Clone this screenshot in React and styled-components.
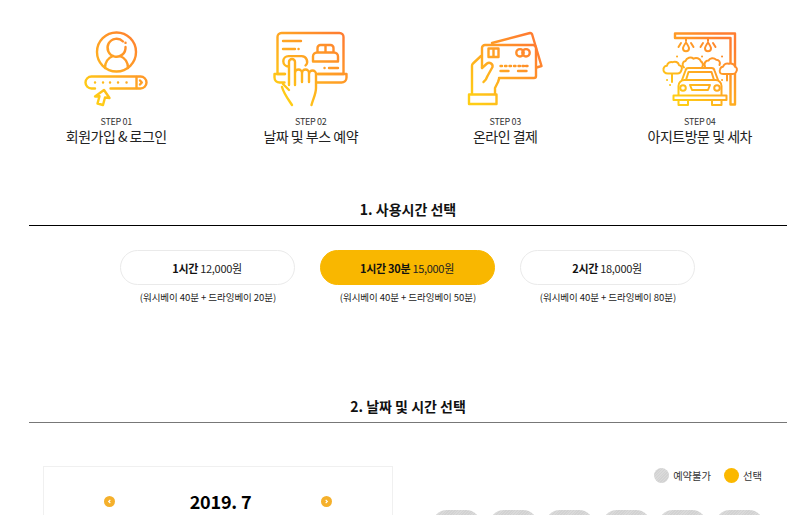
import React from "react";
import styled, { createGlobalStyle } from "styled-components";

const GlobalStyle = createGlobalStyle`
  html, body { margin: 0; padding: 0; background: #fff; }
  body { font-family: "Noto Sans CJK KR", "Noto Sans", sans-serif; color: #111; }
`;

const Page = styled.div`
  width: 800px;
  height: 515px;
  overflow: hidden;
  padding: 0 13px 0 29px;
  box-sizing: border-box;
`;

const StepList = styled.ul`
  display: grid;
  grid-template-columns: repeat(4, 194.5px);
  margin: 0 0 0 -10px;
  padding: 30px 0 0;
  list-style: none;
`;

const Step = styled.li`
  display: flex;
  flex-direction: column;
  align-items: center;
`;

const StepIcon = styled.svg`
  display: block;
  width: 80px;
  height: 80px;
  fill: none;
  stroke-width: ${(p) => p.$weight || 2.4};
  stroke-linecap: round;
  stroke-linejoin: round;
`;

const StepNo = styled.span`
  margin-top: 6px;
  font-size: 9px;
  line-height: 12px;
  letter-spacing: -0.3px;
  color: #333;
`;

const StepName = styled.strong`
  margin-bottom: 3px;
  font-size: 14px;
  font-weight: 400;
  line-height: 17px;
  letter-spacing: -0.5px;
  color: #222;
`;

const SectionTitle = styled.h2`
  margin: ${(p) => p.$top}px 0 0;
  padding-bottom: 6px;
  font-size: 14px;
  font-weight: 700;
  line-height: 20px;
  text-align: center;
  color: #111;
  border-bottom: 1px solid ${(p) => p.$line};
`;

const TimeRow = styled.div`
  display: flex;
  justify-content: center;
  gap: 25px;
  margin: 24px 2px 0 0;
`;

const TimeOption = styled.div`
  width: 175px;
  text-align: center;
`;

const TimeButton = styled.button`
  display: block;
  width: 100%;
  height: 35px;
  padding: 0;
  border: 1px solid ${(p) => (p.$active ? "#f9b700" : "#eaeaea")};
  border-radius: 18px;
  background: ${(p) => (p.$active ? "#f9b700" : "#fff")};
  font-family: inherit;
  font-size: 11px;
  letter-spacing: -0.3px;
  color: #222;
  b { font-weight: 700; color: #111; }
`;

const TimeNote = styled.p`
  margin: 5px 0 0;
  padding-left: 2px;
  font-size: 9.5px;
  line-height: 15px;
  letter-spacing: -0.05px;
  color: #222;
`;

const Booking = styled.div`
  display: flex;
  margin: 43px 0 0 14px;
`;

const Calendar = styled.div`
  flex: none;
  box-sizing: border-box;
  width: 350px;
  height: 300px;
  padding-top: 21px;
  border: 1px solid #f0f0f0;
`;

const CalendarHead = styled.div`
  display: flex;
  align-items: center;
  justify-content: space-between;
  padding: 0 60px;
`;

const MonthTitle = styled.strong`
  padding-left: 5px;
  font-size: 18px;
  font-weight: 700;
  line-height: 26px;
  letter-spacing: -0.2px;
  color: #000;
`;

const MonthArrow = styled.span`
  display: flex;
  align-items: center;
  justify-content: center;
  width: 11px;
  height: 11px;
  border-radius: 50%;
  background: #f5b02b;
  svg { width: 5px; height: 5px; fill: none; stroke: #fff; stroke-width: 1.4; }
`;

const Slots = styled.div`
  flex: 1;
  padding: 2px 0 0 39px;
`;

const Legend = styled.div`
  display: flex;
  justify-content: flex-end;
  gap: 13px;
  padding-right: 25px;
`;

const LegendItem = styled.span`
  display: flex;
  align-items: center;
  gap: 4px;
  font-size: 10.3px;
  line-height: 15px;
  color: #333;
`;

const hatch = `repeating-linear-gradient(135deg, #d2d2d2 0 1px, #dadada 1px 2px)`;

const Dot = styled.i`
  width: 15px;
  height: 15px;
  border-radius: 50%;
  background: ${(p) => (p.$on ? "#fbb800" : hatch)};
`;

const SlotRow = styled.div`
  display: flex;
  gap: 7.5px;
  margin-top: 27px;
`;

const Slot = styled.div`
  width: 49px;
  height: 30px;
  border-radius: 15px;
  background: ${hatch};
`;

const Grad = ({ id, x1, y1, x2, y2 }) => (
  <defs>
    <linearGradient id={id} gradientUnits="userSpaceOnUse" x1={x1} y1={y1} x2={x2} y2={y2}>
      <stop offset="0" stopColor="#ffcd15" />
      <stop offset="1" stopColor="#ff7d30" />
    </linearGradient>
  </defs>
);

const LoginIcon = () => (
  <StepIcon viewBox="76 30 80 80" stroke="url(#g1)">
    <Grad id="g1" x1="92" y1="96" x2="146" y2="42" />
    <circle cx="116.5" cy="52" r="19.500" />
    <path d="M123 41.500a9 9 0 1 0 2.500 5.500" />
    <path d="M125.500 42.800v.1" />
    <path d="M105 68c0-6 3-10 8-12M128 68c0-6-3-10-8-12" />
    <path d="M95 88.500h-3.500a6 6 0 0 1 0-12h49a6 6 0 0 1 0 12h-30" />
    <path d="M136.500 77v11" />
    <path d="M140 80.500l1.800 2-1.800 2" />
    <path d="M95 82.500h.1M103 82.500h.1M110 82.500h.1M118 82.500h.1M126.500 82.500h.1" />
    <path d="M104 90l5.500 8-4.500-.5-2 7.500-5.500-1.500 2-7.300-4.500.3z" />
  </StepIcon>
);

const BookIcon = () => (
  <StepIcon viewBox="271 30 80 80" stroke="url(#g2)">
    <Grad id="g2" x1="282" y1="96" x2="342" y2="36" />
    <path d="M285 74h-7.500V37a4 4 0 0 1 4-4h58a4 4 0 0 1 4 4v37h-26" />
    <path d="M283 41h18M283 49h12M298.500 49h.1" />
    <path d="M313 61.500v-5a4 4 0 0 1 4-4h17a4 4 0 0 1 4 4v5zM317.500 52v-4a3 3 0 0 1 3-3h10a3 3 0 0 1 3 3v4M325.500 45v7" />
    <path d="M324.500 68h.1M329 68h9" />
    <path d="M288.500 66.500a5.200 5.200 0 0 1 0-10.400h13a5.500 5.500 0 0 1 4 9.400" />
    <path d="M289 85V62a3 3 0 0 1 6 0v23M295 73a3.200 3.200 0 0 1 7 0v9M302 73a3.200 3.200 0 0 1 7 0v9M309 74a3.200 3.200 0 0 1 7 0v14c0 6-3 11-4.500 17" />
    <path d="M285 74h-10.500v3.500a5 5 0 0 0 5 5h5M318 74h28.500v3.500a5 5 0 0 1-5 5h-25" />
    <path d="M283 84l6 6M282 87c2 7 6 12 10 18" />
  </StepIcon>
);

const CardIcon = () => (
  <StepIcon viewBox="465 30 80 80" stroke="url(#g3)">
    <Grad id="g3" x1="474" y1="100" x2="534" y2="46" />
    <path d="M482 68V48a3 3 0 0 1 3-3h48a3 3 0 0 1 3 3v28a2 2 0 0 1-2 2h-35" />
    <path d="M492 43l38-10a2 2 0 0 1 2 1l9.500 32-5 1.500" />
    <path d="M488.500 48.500h10v8.500h-10zM493.500 48.500v8.500" />
    <circle cx="520" cy="52.800" r="3.700" />
    <circle cx="526" cy="52.800" r="3.700" />
    <path d="M500.500 66h1.500M505 66h1.500M509.500 66h1.500M514 66h1.500M518.500 66h1.500M522.500 66h1.500M526 66h1.500" />
    <path d="M500.500 71h8M518 71h8.500" />
    <path d="M481 56l-8 7.500a3 3 0 0 0-1 2.200V94" />
    <path d="M482 68l5-4.500a3.500 3.500 0 0 1 5.500 3.500l-5 9c-1 3-2.500 5-4 6" />
    <path d="M499 79l-1 3-3 6v6" />
    <path d="M469 94.500h27.500v9.500h-27.500z" />
  </StepIcon>
);

const WashIcon = () => (
  <StepIcon viewBox="660 30 80 80" stroke="url(#g4)" $weight={2}>
    <Grad id="g4" x1="682" y1="102" x2="730" y2="44" />
    <path d="M675 33.500h60v71h-4.500V38h-55.500z" strokeWidth="2.400" />
    <path d="M686 38v3M681 43l-2.500 4M691 43l2.500 4M708 38v3M703 43l-2.500 4M713 43l2.500 4" />
    <path d="M686 42.500c-2.200 3.200-3 4.400-3 5.700a3 3 0 0 0 6 0c0-1.300-.8-2.500-3-5.700zM708 42.500c-2.200 3.200-3 4.400-3 5.700a3 3 0 0 0 6 0c0-1.300-.8-2.500-3-5.700z" />
    <path d="M677 56.500h.1M702 56.500h.1M722 56.500h.1" />
    <path d="M684 67.500c-2.500-2-1.500-6 1.500-6.500 1-3.500 5.500-4.500 8-2.300 2.500-1.500 6.500-.5 7.500 2.800 2 1 2.500 3.800 1 6M705 66.500c-1.500-3 .5-6 3.500-6 1.200-2.700 5.500-3.200 7.500-.8 3 0 4.800 2.400 3.500 5.300" />
    <path d="M668 73.500c-3 0-5-2-4.500-4.500.2-2 2-3.300 3.500-3.300.5-3 3-4 5.500-3.500 2.500-1.200 6-.2 6.500 3 2.500.2 3.500 2.500 2.500 4.800-.5 2-2.500 3.500-4 3.500zM672 74v8" />
    <path d="M723 74c-2.800 0-4-2-3-4.500.5-1.800 1.800-2.700 3-2.700.8-3 3.500-4 6-3 2.500-.8 5.500.3 6 3 2 .4 2.500 3 1.200 5-.7 1.500-2 2.200-3.200 2.200zM727 74.500v6" fill="#fff" />
    <path d="M667 80h.1M670 85h.1M722 80h.1" />
    <path d="M682 80l3.500-9.500a3 3 0 0 1 3-2.500h23a3 3 0 0 1 3 2.500l3.500 9.500" fill="#fff" />
    <path d="M686 80l2.500-8h23l2.500 8z" />
    <path d="M678.500 95v-9a6 6 0 0 1 6-6h31a6 6 0 0 1 6 6v9" />
    <circle cx="683" cy="88" r="2.800" />
    <circle cx="717" cy="88" r="2.800" />
    <path d="M690 85h20l-2 5h-16z" />
    <path d="M673.500 95.500h53v4.500h-53zM678.500 100v5h9.500v-5M712 100v5h9.500v-5" />
  </StepIcon>
);

const steps = [
  { no: "STEP 01", name: "회원가입 & 로그인", icon: <LoginIcon /> },
  { no: "STEP 02", name: "날짜 및 부스 예약", icon: <BookIcon /> },
  { no: "STEP 03", name: "온라인 결제", icon: <CardIcon /> },
  { no: "STEP 04", name: "아지트방문 및 세차", icon: <WashIcon /> },
];

const times = [
  { label: "1시간", price: "12,000원", note: "(워시베이 40분 + 드라잉베이 20분)" },
  { label: "1시간 30분", price: "15,000원", note: "(워시베이 40분 + 드라잉베이 50분)", active: true },
  { label: "2시간", price: "18,000원", note: "(워시베이 40분 + 드라잉베이 80분)" },
];

const App = () => {
  return (
    <Page>
      <GlobalStyle />
      <StepList>
        {steps.map((s) => (
          <Step key={s.no}>
            {s.icon}
            <StepNo>{s.no}</StepNo>
            <StepName>{s.name}</StepName>
          </Step>
        ))}
      </StepList>

      <SectionTitle $top={51} $line="#000">1. 사용시간 선택</SectionTitle>
      <TimeRow>
        {times.map((t) => (
          <TimeOption key={t.label}>
            <TimeButton $active={t.active}>
              <b>{t.label}</b> {t.price}
            </TimeButton>
            <TimeNote>{t.note}</TimeNote>
          </TimeOption>
        ))}
      </TimeRow>

      <SectionTitle $top={91} $line="#777">2. 날짜 및 시간 선택</SectionTitle>
      <Booking>
        <Calendar>
          <CalendarHead>
            <MonthArrow>
              <svg viewBox="0 0 6 6"><path d="M4 1L2 3l2 2" /></svg>
            </MonthArrow>
            <MonthTitle>2019. 7</MonthTitle>
            <MonthArrow>
              <svg viewBox="0 0 6 6"><path d="M2 1l2 2-2 2" /></svg>
            </MonthArrow>
          </CalendarHead>
        </Calendar>
        <Slots>
          <Legend>
            <LegendItem><Dot />예약불가</LegendItem>
            <LegendItem><Dot $on />선택</LegendItem>
          </Legend>
          <SlotRow>
            {[1, 2, 3, 4, 5, 6].map((n) => (
              <Slot key={n} />
            ))}
          </SlotRow>
        </Slots>
      </Booking>
    </Page>
  );
};

export default App;
